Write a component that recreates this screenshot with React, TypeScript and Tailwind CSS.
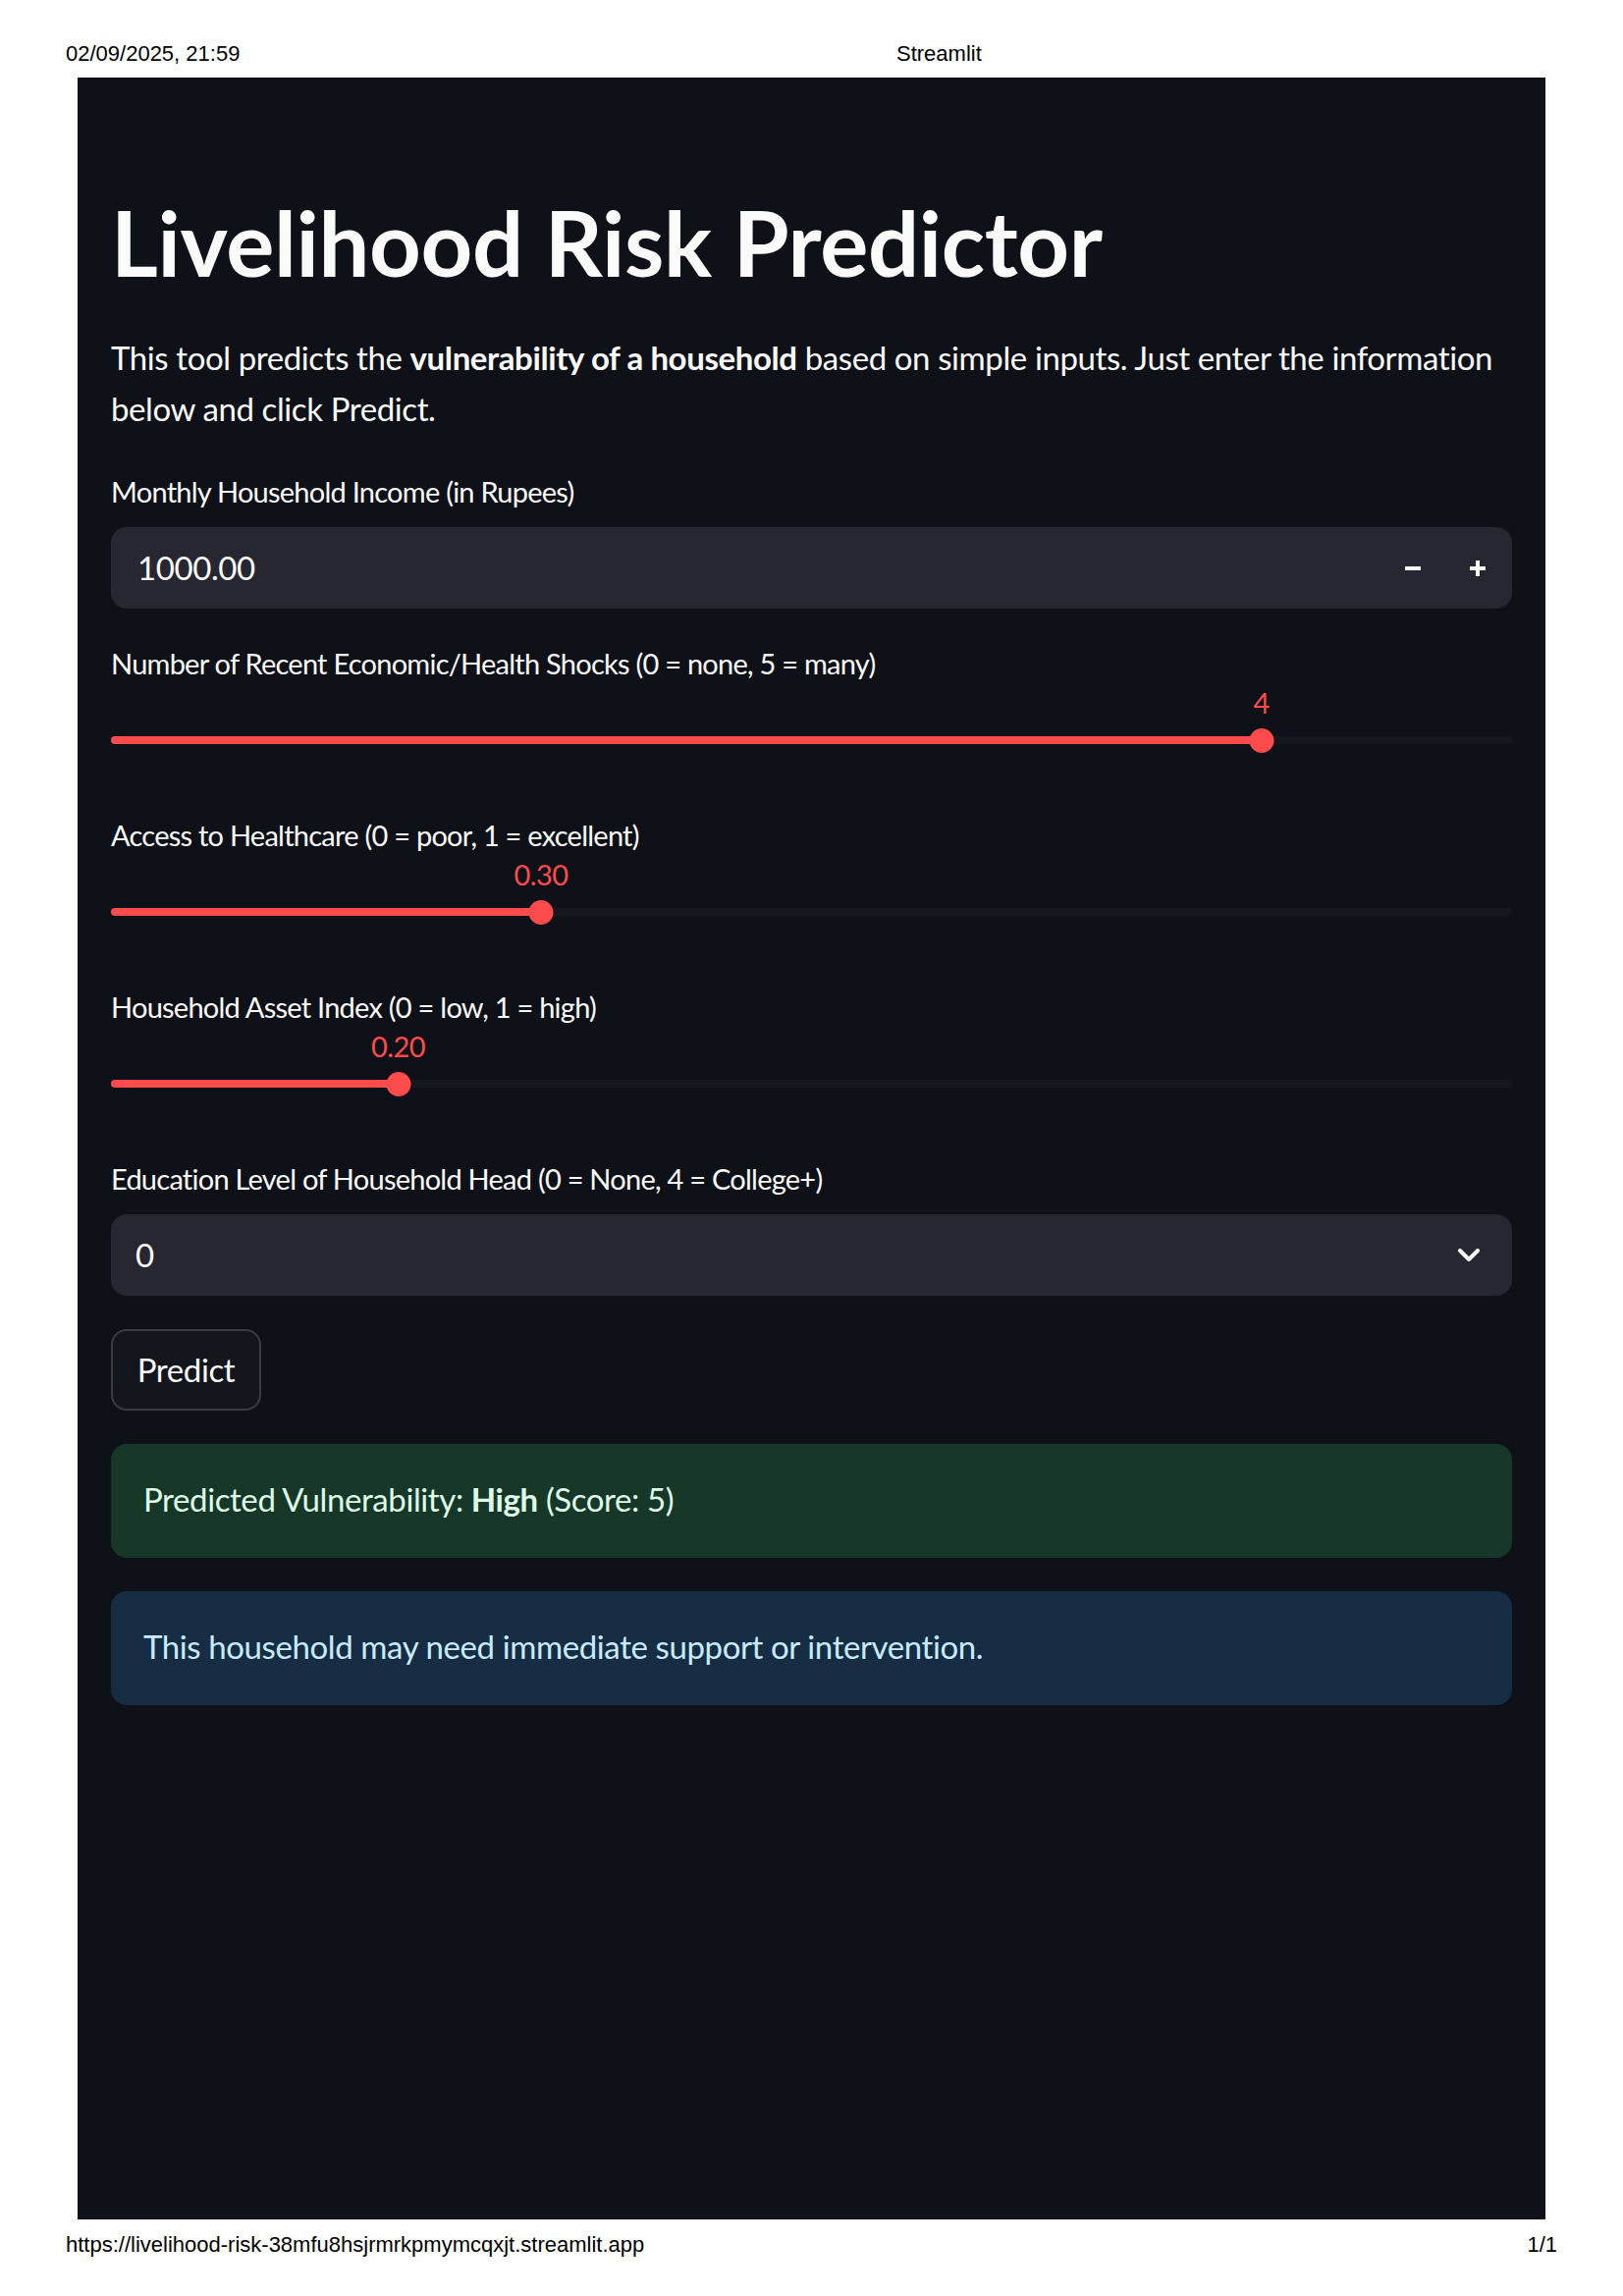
// Livelihood Risk Predictor – printed Streamlit page
// White print margins with date/title header and URL footer, dark app panel in between.

const SLIDERS = [
  { label: "Number of Recent Economic/Health Shocks (0 = none, 5 = many)", value: "4", pct: 82.1 },
  { label: "Access to Healthcare (0 = poor, 1 = excellent)", value: "0.30", pct: 30.7 },
  { label: "Household Asset Index (0 = low, 1 = high)", value: "0.20", pct: 20.5 },
];

function Label({ children }: { children: React.ReactNode }) {
  return (
    <div className="h-[40px] text-[29px] leading-[40px] tracking-[-0.026em] text-[#fafafa]">{children}</div>
  );
}

function Slider({ label, value, pct }: { label: string; value: string; pct: number }) {
  return (
    <div className="flex flex-col">
      <Label>{label}</Label>
      {/* value bubble above the thumb */}
      <div className="relative h-[40px]">
        <span
          className="absolute top-0 -translate-x-1/2 text-[29px] leading-[40px] tracking-[-0.02em] text-[#ff4b4b]"
          style={{ left: `${pct}%` }}
        >
          {value}
        </span>
      </div>
      <div className="relative flex h-[36px] items-center">
        <div className="h-[8px] w-full rounded-full bg-[#16181e]" />
        <div
          className="absolute left-0 h-[8px] rounded-l-full bg-[#ff4b4b]"
          style={{ width: `${pct}%` }}
        />
        <div
          className="absolute h-[25px] w-[25px] -translate-x-1/2 rounded-full bg-[#ff4b4b]"
          style={{ left: `${pct}%` }}
        />
      </div>
    </div>
  );
}

export default function App() {
  return (
    <div className="flex min-h-[2339px] w-[1653px] flex-col bg-white font-['Lato',sans-serif]">
      {/* print header */}
      <div className="flex h-[79px] px-[67px] pt-[43px] font-['Liberation_Sans',Arial,sans-serif] text-[22px] leading-[24px] text-black">
        <span className="w-[846px]">02/09/2025, 21:59</span>
        <span>Streamlit</span>
      </div>

      {/* app panel */}
      <div className="mx-[79px] flex h-[2182px] flex-col bg-[#0e1117] px-[34px] pt-[113px] tracking-[-0.025em]">
        <h1 className="text-[92px] font-bold leading-[110px] tracking-[-0.004em] text-[#fafafa]">
          Livelihood Risk Predictor
        </h1>

        <p className="mt-[36px] text-[33px] leading-[52px] text-[#fafafa]">
          This tool predicts the <strong className="font-bold">vulnerability of a household</strong> based on simple
          inputs. Just enter the information below and click Predict.
        </p>

        <div className="mt-[39px]">
          <Label>Monthly Household Income (in Rupees)</Label>
        </div>
        <div className="mt-[16px] flex h-[83px] items-center rounded-[16px] bg-[#262730]">
          <span className="flex-1 pl-[27px] text-[33px] text-[#fafafa]">1000.00</span>
          <button className="flex h-full w-[66px] items-center justify-center">
            <svg width="16" height="4" viewBox="0 0 16 4">
              <rect width="16" height="4" fill="#fafafa" />
            </svg>
          </button>
          <button className="mr-[2px] flex h-full w-[66px] items-center justify-center">
            <svg width="16" height="16" viewBox="0 0 16 16">
              <rect y="6" width="16" height="4" fill="#fafafa" />
              <rect x="6" width="4" height="16" fill="#fafafa" />
            </svg>
          </button>
        </div>

        <div className="mt-[36px] flex flex-col gap-[59px]">
          {SLIDERS.map((s) => (
            <Slider key={s.label} {...s} />
          ))}
        </div>

        <div className="mt-[59px]">
          <Label>Education Level of Household Head (0 = None, 4 = College+)</Label>
        </div>
        <div className="mt-[16px] flex h-[83px] items-center justify-between rounded-[16px] bg-[#262730] pl-[25px] pr-[33px]">
          <span className="text-[33px] text-[#fafafa]">0</span>
          <svg width="22" height="13" viewBox="0 0 22 13" fill="none">
            <path d="M2 2l9 9 9-9" stroke="#fafafa" strokeWidth="4" strokeLinecap="round" strokeLinejoin="round" />
          </svg>
        </div>

        <div className="mt-[34px]">
          <button className="h-[83px] w-[153px] rounded-[16px] border-2 border-[#3b3d45] bg-[#13161d] text-[33px] text-[#fafafa]">
            Predict
          </button>
        </div>

        <div className="mt-[34px] rounded-[16px] bg-[#173828] px-[33px] pb-[34px] pt-[30px] text-[33px] leading-[52px] text-[#dffde9]">
          Predicted Vulnerability: <strong className="font-bold">High</strong> (Score: 5)
        </div>

        <div className="mt-[34px] rounded-[16px] bg-[#172d43] px-[33px] pb-[34px] pt-[30px] text-[33px] leading-[52px] text-[#c7ebff]">
          This household may need immediate support or intervention.
        </div>
      </div>

      {/* print footer */}
      <div className="flex justify-between px-[67px] pt-[14px] font-['Liberation_Sans',Arial,sans-serif] text-[22px] leading-[24px] text-black">
        <span>https://livelihood-risk-38mfu8hsjrmrkpmymcqxjt.streamlit.app</span>
        <span>1/1</span>
      </div>
    </div>
  );
}
